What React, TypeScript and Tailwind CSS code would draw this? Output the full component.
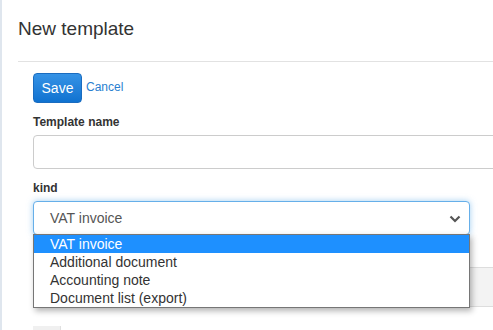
import React from "react";

const options = ["VAT invoice", "Additional document", "Accounting note", "Document list (export)"];

export default function App() {
  return (
    <div
      className="relative h-[330px] w-[493px] overflow-hidden bg-white border-l-2 border-[#dfe6ee] text-[#333]"
      style={{ fontFamily: '"Liberation Sans", Arial, sans-serif' }}
    >
      <div className="pl-4">
        <h1 className="pt-[18px] text-[19px] leading-[22px] text-[#333]">New template</h1>
        <div className="mt-[21px] h-px w-[600px] bg-[#e2e2e2]" />

        <div className="pl-[15px]">
          {/* actions */}
          <div className="mt-[11px] flex items-center gap-1">
            <button className="h-[30px] w-[49px] rounded-[4px] border border-[#1a6cc0] bg-gradient-to-b from-[#3593e6] to-[#0f72d0] pt-px text-[14px] text-white">
              Save
            </button>
            <a className="-mt-[2px] text-[12px] text-[#2a7fd0]">Cancel</a>
          </div>

          {/* template name */}
          <label className="mt-[12px] block text-[12px] font-bold leading-[14px]">Template name</label>
          <div className="mt-[6px] h-[34px] w-[520px] rounded-[4px] border border-[#ccc] bg-white" />

          {/* kind */}
          <label className="mt-[12px] block text-[12px] font-bold leading-[14px]">kind</label>
          <div className="relative mt-[6px] w-[437px]">
            <div className="flex h-[34px] items-center justify-between rounded-[4px] border border-[#66afe9] bg-white pl-[16px] pr-[8px] text-[14px] text-[#555] shadow-[0_0_6px_rgba(102,175,233,0.6)]">
              <span>VAT invoice</span>
              <svg width="12" height="8" viewBox="0 0 12 8" className="mt-[2px]">
                <path d="M1.5 1.5 L6 6 L10.5 1.5" fill="none" stroke="#555" strokeWidth="2.2" />
              </svg>
            </div>

            {/* open dropdown list */}
            <div className="absolute left-0 top-[33px] z-10 w-[437px] border border-[#767676] bg-white shadow-[2px_3px_6px_rgba(0,0,0,0.3)]">
              {options.map((o, i) => (
                <div
                  key={o}
                  className={
                    i === 0
                      ? "h-[18px] pl-[16px] text-[14px] leading-[18px] bg-[#1e90ff] text-white"
                      : "h-[18px] pl-[16px] text-[14px] leading-[18px] text-[#333]"
                  }
                >
                  {o}
                </div>
              ))}
            </div>
          </div>

          {/* content behind dropdown */}
          <div className="mt-[32px] h-[40px] w-[520px] border border-[#ddd] bg-[#f3f3f3]" />
          <div className="mt-[19px] h-[10px] w-[28px] bg-[#f0f0f0] border-r border-[#e0e0e0]" />
        </div>
      </div>
    </div>
  );
}
